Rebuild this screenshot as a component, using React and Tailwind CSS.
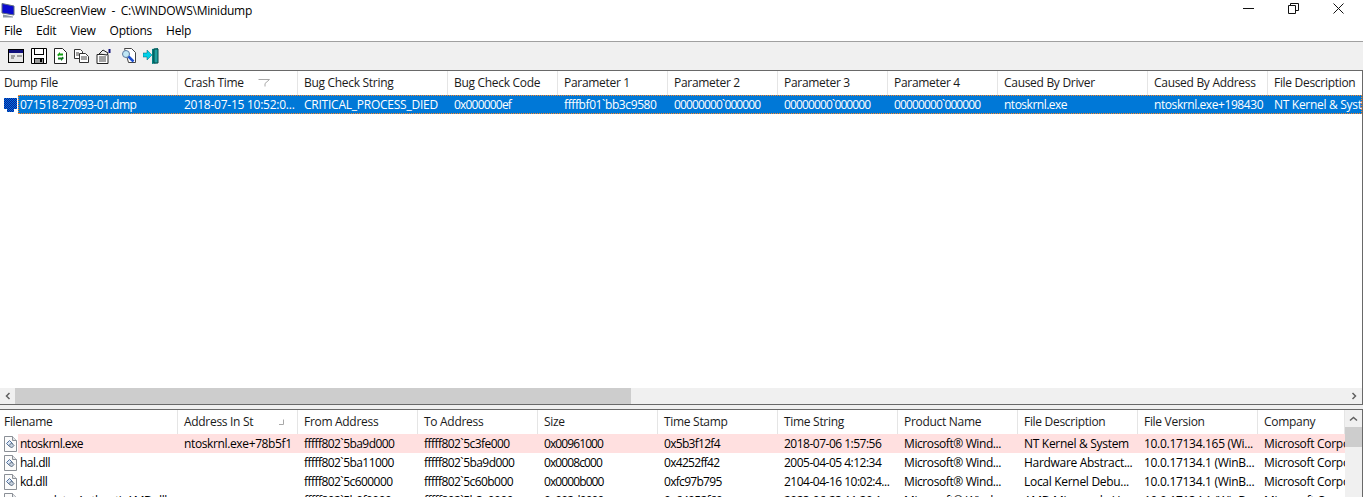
const topCols = [
  ['Dump File', 178, 'tracking-[-0.5px]'],
  ['Crash Time', 120, 'tracking-[-0.25px]'],
  ['Bug Check String', 150, 'tracking-[-0.24px]'],
  ['Bug Check Code', 110, 'tracking-[-0.8px]'],
  ['Parameter 1', 110, 'tracking-[-0.4px]'],
  ['Parameter 2', 110, 'tracking-[-0.87px]'],
  ['Parameter 3', 110, 'tracking-[-0.87px]'],
  ['Parameter 4', 110, 'tracking-[-0.87px]'],
  ['Caused By Driver', 150, 'tracking-[-0.5px]'],
  ['Caused By Address', 120, 'tracking-[-0.42px]'],
  ['File Description', 120, 'tracking-[-0.3px]'],
];

const topRow = [
  '071518-27093-01.dmp',
  '2018-07-15 10:52:0...',
  'CRITICAL_PROCESS_DIED',
  '0x000000ef',
  'ffffbf01`bb3c9580',
  '00000000`000000',
  '00000000`000000',
  '00000000`000000',
  'ntoskrnl.exe',
  'ntoskrnl.exe+198430',
  'NT Kernel & System',
];

const bottomCols = [
  ['Filename', 178, 'tracking-[-0.5px]'],
  ['Address In St', 120, 'tracking-[-0.37px]'],
  ['From Address', 120, 'tracking-[-0.55px]'],
  ['To Address', 120, 'tracking-[-0.55px]'],
  ['Size', 120, 'tracking-[-0.9px]'],
  ['Time Stamp', 120, 'tracking-[-0.7px]'],
  ['Time String', 120, 'tracking-[-0.5px]'],
  ['Product Name', 120, 'tracking-[-0.4px]'],
  ['File Description', 120, 'tracking-[-0.3px]'],
  ['File Version', 120, 'tracking-[-0.3px]'],
  ['Company', 87, 'tracking-[-0.3px]'],
];

const bottomRows = [
  ['ntoskrnl.exe', 'ntoskrnl.exe+78b5f1', 'fffff802`5ba9d000', 'fffff802`5c3fe000', '0x00961000', '0x5b3f12f4', '2018-07-06 1:57:56', 'Microsoft® Wind...', 'NT Kernel & System', '10.0.17134.165 (Wi...', 'Microsoft Corporation'],
  ['hal.dll', '', 'fffff802`5ba11000', 'fffff802`5ba9d000', '0x0008c000', '0x4252ff42', '2005-04-05 4:12:34', 'Microsoft® Wind...', 'Hardware Abstract...', '10.0.17134.1 (WinB...', 'Microsoft Corporation'],
  ['kd.dll', '', 'fffff802`5c600000', 'fffff802`5c60b000', '0x0000b000', '0xfc97b795', '2104-04-16 10:02:4...', 'Microsoft® Wind...', 'Local Kernel Debu...', '10.0.17134.1 (WinB...', 'Microsoft Corporation'],
  ['mcupdate_AuthenticAMD.dll', '', 'fffff802`5b0f0000', 'fffff802`5b3c0000', '0x002d0000', '0x64952f60', '2023-06-23 11:20:1...', 'Microsoft® Wind...', 'AMD Microcode U...', '10.0.17134.1 (WinB...', 'Microsoft Corporation'],
];

function DllIcon() {
  return (
    <svg width="15" height="16" viewBox="0 0 15 16" className="shrink-0">
      <path d="M1.500 .5h8l4 4v11h-12z" fill="#fbfbfb" stroke="#8a8f96" />
      <path d="M9.500 .5v4h4" fill="#e4e6e8" stroke="#8a8f96" />
      <path d="M3.500 7.500l3-3 3 3-3 3z" fill="#dbe6f5" stroke="#4f6f9c" />
      <path d="M6 9.500l2.500-2.500 2.500 2.500-2.500 2.500z" fill="#c3cfdd" stroke="#5b6b80" />
    </svg>
  );
}

function MonitorIcon() {
  return (
    <svg width="15" height="15" viewBox="0 0 15 15" className="shrink-0">
      <path d="M1 .5l12 2.500v9L1 10z" fill="#0a0ad0" stroke="#5f6c80" />
      <path d="M2 11.500l10 2v1H2z" fill="#8c97a6" />
    </svg>
  );
}

// same monitor, dithered because the row is selected
function SelectedMonitorIcon() {
  return (
    <svg width="15" height="16" viewBox="0 0 15 16" className="shrink-0">
      <defs>
        <pattern id="dither" width="2" height="2" patternUnits="userSpaceOnUse">
          <rect width="2" height="2" fill="#0a1a9c" />
          <rect width="1" height="1" fill="#0078d7" />
          <rect x="1" y="1" width="1" height="1" fill="#0078d7" />
        </pattern>
      </defs>
      <rect x="1" y="1" width="13" height="11" fill="url(#dither)" />
      <rect x="4" y="12" width="7" height="3" fill="url(#dither)" />
    </svg>
  );
}

function ToolIcons() {
  return (
    <div className="flex items-center gap-[7px]">
      <svg width="16" height="14" viewBox="0 0 16 14">
        <rect x=".5" y=".5" width="15" height="13" fill="#e8e8e8" stroke="#000" />
        <rect x="1" y="1" width="14" height="3" fill="#10107c" />
        <path d="M3 7h4M3 9h3M9 7h5" stroke="#555" />
      </svg>
      <svg width="16" height="16" viewBox="0 0 16 16">
        <path d="M.5 .5h15v15H.5z" fill="#fff" stroke="#000" />
        <rect x="3.500" y=".5" width="9" height="6" fill="#fff" stroke="#000" />
        <rect x="3.500" y="10.500" width="9" height="5" fill="#9a9a9a" stroke="#000" />
        <rect x="9" y="11" width="2" height="3" fill="#000" />
      </svg>
      <svg width="13" height="16" viewBox="0 0 13 16">
        <path d="M.5 .5h8l4 4v11H.5z" fill="#fff" stroke="#222" />
        <path d="M3 7l3-3v1.500h3v2H5v1z" fill="#12a012" />
        <path d="M10 10l-3 3v-1.500H4v-2h4v-1z" fill="#0c7a1c" />
      </svg>
      <svg width="15" height="14" viewBox="0 0 15 14">
        <path d="M.5 .5h6l2 2v7H.5z" fill="#fff" stroke="#333" />
        <path d="M5.500 4.500h6l3 3v6h-9z" fill="#fff" stroke="#333" />
        <path d="M2 4h3M2 6h3M7 8h6M7 10h6" stroke="#444" />
      </svg>
      <svg width="16" height="15" viewBox="0 0 16 15">
        <path d="M1 5.500h11v9H1z" fill="#fff" stroke="#222" />
        <path d="M3 5l4-4 5 3-1 2z" fill="#eee" stroke="#222" />
        <path d="M3 8h7M3 10h7M3 12h7" stroke="#444" />
        <path d="M13.500 4V0" stroke="#10107c" strokeWidth="2" />
      </svg>
      <svg width="15" height="16" viewBox="0 0 15 16" className="ml-[2px]">
        <path d="M3.500 .5h7l4 4v10h-7z" fill="#fff" stroke="#444" />
        <circle cx="5" cy="6" r="3.500" fill="#bfe6f5" stroke="#5b7aa0" />
        <path d="M7.500 8.500l5 5" stroke="#1c4fd0" strokeWidth="2.500" />
      </svg>
      <svg width="16" height="16" viewBox="0 0 16 16">
        <path d="M9 1l6-1v15l-6 1z" fill="#008080" />
        <path d="M11 1h4v14h-4z" fill="#20a0a0" stroke="#004848" />
        <path d="M0 5h4V2l5 5-5 5V9H0z" fill="#00d0e8" stroke="#006070" strokeWidth=".5" />
      </svg>
    </div>
  );
}

function Header({ cols, sort }) {
  return (
    <div className="flex h-[24px] shrink-0 bg-white tracking-[-0.3px]">
      {cols.map(([name, w], i) => (
        <div
          key={name + i}
          style={{ width: w }}
          className="flex shrink-0 items-center justify-between overflow-hidden whitespace-nowrap border-r border-[#e5e5e5] pl-1 text-[#1a1a1a]"
        >
          <span className={i === 0 ? '' : 'pl-[2px]'}>{name}</span>
          {i === 1 && sort}
        </div>
      ))}
    </div>
  );
}

function Cell({ w, first, track, children }) {
  return (
    <div
      style={{ width: w }}
      className={`shrink-0 overflow-hidden whitespace-nowrap ${first ? 'pl-[2px]' : 'pl-[6px]'} ${track}`}
    >
      {children}
    </div>
  );
}

export default function App() {
  return (
    <div
      className="flex h-[497px] w-[1363px] flex-col overflow-hidden bg-white text-[12px] text-black"
      style={{ fontFamily: '"Open Sans", "Noto Sans", sans-serif' }}
    >
      {/* title bar */}
      <div className="flex h-[21px] shrink-0 items-center justify-between">
        <div className="flex items-center tracking-[-0.25px]">
          <div className="ml-[1px] mr-[4px]"><MonitorIcon /></div>
          <span>BlueScreenView&nbsp; -&nbsp; C:\WINDOWS\Minidump</span>
        </div>
        <div className="flex items-center gap-[34px] pb-[5px] pr-[19px]">
          <svg width="11" height="11" viewBox="0 0 11 11"><path d="M0 5.500h11" stroke="#111" /></svg>
          <svg width="11" height="11" viewBox="0 0 11 11" fill="none" stroke="#111"><path d="M.5 2.500h7v8h-7zM2.500 2.500v-2h8v7h-3" /></svg>
          <svg width="11" height="11" viewBox="0 0 11 11" stroke="#111"><path d="M.5 .5l10 10M10.500 .5l-10 10" /></svg>
        </div>
      </div>

      {/* menu */}
      <div className="flex h-[20px] shrink-0 items-center gap-[14px] pl-[4px] tracking-[-0.25px]">
        {['File', 'Edit', 'View', 'Options', 'Help'].map((m) => (
          <span key={m}>{m}</span>
        ))}
      </div>

      {/* toolbar */}
      <div className="flex h-[29px] shrink-0 items-center border-t border-[#a0a0a0] bg-[#f0f0f0] pl-[8px]">
        <ToolIcons />
      </div>

      {/* dump list */}
      <div className="flex h-[335px] shrink-0 flex-col overflow-hidden border-y border-r border-[#696969]">
        <Header
          cols={topCols}
          sort={
            <svg width="12" height="8" viewBox="0 0 12 8" className="mr-[27px] shrink-0" fill="none" stroke="#a8a8a8">
              <path d="M.5 .5h11L7 4.500v3" />
            </svg>
          }
        />
        <div className="flex h-[19px] shrink-0 items-center">
          <div className="ml-[3px] shrink-0"><SelectedMonitorIcon /></div>
          <div className="flex h-[19px] flex-1 items-center overflow-hidden bg-[#0078d7] text-white outline-1 -outline-offset-1 outline-dotted outline-[#ff8728]">
            {topCols.map(([name, w, track], i) => (
              <Cell key={name} w={i === 0 ? w - 18 : w} first={i === 0} track={track}>{topRow[i]}</Cell>
            ))}
          </div>
        </div>
        <div className="flex-1" />
        {/* horizontal scrollbar */}
        <div className="flex h-[16px] shrink-0 bg-[#f0f0f0]">
          <div className="flex w-[15px] shrink-0 items-center justify-center">
            <svg width="8" height="8" viewBox="0 0 8 8" fill="none" stroke="#606060" strokeWidth="1.500"><path d="M5.500 1L2.500 4l3 3" /></svg>
          </div>
          <div className="w-[616px] shrink-0 bg-[#cdcdcd]" />
          <div className="flex-1" />
          <div className="flex w-[17px] shrink-0 items-center justify-center">
            <svg width="8" height="8" viewBox="0 0 8 8" fill="none" stroke="#606060" strokeWidth="1.500"><path d="M2.500 1l3 3-3 3" /></svg>
          </div>
        </div>
      </div>

      {/* splitter */}
      <div className="h-[4px] shrink-0 bg-[#f0f0f0]" />

      {/* modules list */}
      <div className="flex min-h-0 flex-1 border-t border-[#696969]">
        <div className="w-[1345px] shrink-0 overflow-hidden">
          <Header
            cols={bottomCols}
            sort={
              <svg width="6" height="7" viewBox="0 0 6 7" className="mr-[13px] shrink-0" fill="none" stroke="#a8a8a8">
                <path d="M5.500 .5v5H1" />
              </svg>
            }
          />
          {bottomRows.map((row, r) => (
            <div key={row[0]} className="flex h-[19px] items-center">
              <div className="ml-[3px] shrink-0"><DllIcon /></div>
              <div className={`flex h-[19px] flex-1 items-center overflow-hidden ${r === 0 ? 'bg-[#ffe0e0]' : ''}`}>
                {bottomCols.map(([name, w, track], i) => (
                  <Cell key={name} w={i === 0 ? w - 18 : w} first={i === 0} track={track}>{row[i]}</Cell>
                ))}
              </div>
            </div>
          ))}
        </div>
        {/* vertical scrollbar */}
        <div className="flex flex-1 flex-col border-r border-[#696969] bg-[#f0f0f0]">
          <div className="flex h-[17px] shrink-0 items-center justify-center">
            <svg width="9" height="8" viewBox="0 0 9 8" fill="none" stroke="#606060" strokeWidth="1.500"><path d="M1 5.500l3.500-3 3.500 3" /></svg>
          </div>
          <div className="h-[20px] shrink-0 bg-[#cdcdcd]" />
        </div>
      </div>
    </div>
  );
}
